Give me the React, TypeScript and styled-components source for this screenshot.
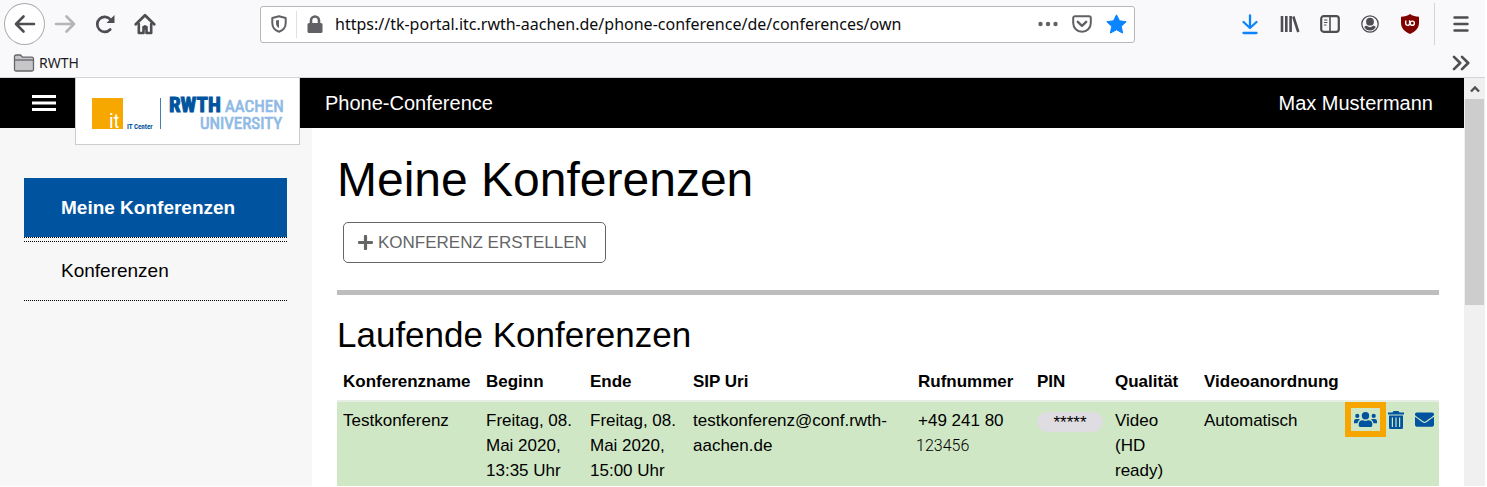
import React from 'react';
import styled, { createGlobalStyle, css } from 'styled-components';
import { FaPlus, FaEnvelope } from 'react-icons/fa';

const GlobalStyle = createGlobalStyle`
  *, *::before, *::after { box-sizing: border-box; }
  body { margin: 0; background: #fff; color: #000; font-family: "Liberation Sans", Arial, sans-serif; }
  button { font: inherit; cursor: pointer; }
  svg { display: block; flex: none; }
`;

const Window = styled.div`
  padding-right: 2px;
`;

const Chrome = styled.div`
  background: #f9f9fb;
  border-bottom: 1px solid #d4d4d7;
  color: #4e4e52;
`;

const Toolbar = styled.div`
  display: flex;
  align-items: center;
  height: 48px;
  padding: 0 4px;
`;

const ToolButton = styled.button<{ $round?: boolean; $color?: string }>`
  display: flex;
  align-items: center;
  justify-content: center;
  flex: none;
  width: 40px;
  height: 40px;
  padding: 0;
  border: 0;
  background: none;
  color: ${p => p.$color ?? 'inherit'};
  ${p => p.$round && css`
    width: 41px;
    height: 42px;
    border: 1px solid #a9a9ac;
    border-radius: 50%;
    background: #fff;
  `}
`;

const AddressBar = styled.div`
  display: flex;
  align-items: center;
  flex: 1;
  min-width: 0;
  height: 37px;
  margin: 0 95px;
  padding: 0 7px 0 10px;
  border: 1px solid #b8b8bb;
  border-radius: 3px;
  background: #fff;
  color: #616165;
`;

const AddressDivider = styled.span`
  width: 1px;
  height: 27px;
  margin: 0 10px 0 9px;
  background: #e0e0e2;
`;

const AddressInput = styled.input`
  flex: 1;
  min-width: 0;
  margin-left: 12px;
  padding: 0;
  border: 0;
  outline: 0;
  background: none;
  color: #0c0c0d;
  font: 16px/24px "Noto Sans", "Open Sans", sans-serif;
`;

const AddressActions = styled.div`
  display: flex;
  align-items: center;
  gap: 14px;
`;

const BareButton = styled.button<{ $color?: string }>`
  padding: 0;
  border: 0;
  background: none;
  color: ${p => p.$color ?? 'inherit'};
`;

const ToolDivider = styled.span`
  width: 1px;
  height: 42px;
  margin: 0 6px 0 4px;
  background: #d4d4d7;
`;

const Bookmarks = styled.div`
  display: flex;
  align-items: center;
  justify-content: space-between;
  height: 29px;
  padding: 0 15px 0 13px;
`;

const Bookmark = styled.a`
  display: flex;
  align-items: center;
  gap: 4px;
  color: #1c1c1e;
  text-decoration: none;
  font: 14px/20px "Noto Sans", "Open Sans", sans-serif;
`;

const Viewport = styled.div`
  display: grid;
  grid-template-columns: minmax(0, 1fr) 21px;
`;

const ScrollTrack = styled.div`
  display: flex;
  flex-direction: column;
  align-items: center;
  background: #f0f0f0;
`;

const ScrollArrow = styled.div`
  display: flex;
  align-items: center;
  height: 21px;
  color: #505050;
`;

const ScrollThumb = styled.div`
  width: 19px;
  height: 206px;
  background: #cdcdcd;
`;

const Header = styled.header`
  display: flex;
  align-items: flex-start;
  height: 50px;
  padding-right: 31px;
  background: #000;
  color: #fff;
  font-size: 20px;
  line-height: 50px;
`;

const MenuButton = styled.button`
  display: flex;
  align-items: center;
  width: 75px;
  height: 50px;
  padding: 0 0 0 32px;
  border: 0;
  background: none;
  color: #fff;
`;

const LogoLink = styled.a`
  position: relative;
  z-index: 1;
  width: 225px;
  height: 67px;
  border: 1px solid #ccc;
  border-top: 0;
  background: #fff;
`;

const AppName = styled.span`
  flex: 1;
  margin-left: 25px;
`;

const Columns = styled.div`
  display: grid;
  grid-template-columns: 312px minmax(0, 1fr);
`;

const Sidebar = styled.nav`
  padding: 50px 25px 0 24px;
  background: #f7f7f7;
`;

const NavList = styled.ul`
  display: flex;
  flex-direction: column;
  gap: 3px;
  margin: 0;
  padding: 0;
  list-style: none;
`;

const NavLink = styled.a<{ $active?: boolean }>`
  display: flex;
  align-items: center;
  height: 60px;
  padding-left: 37px;
  border-bottom: 1px dotted #000;
  color: #000;
  font-size: 19px;
  text-decoration: none;
  ${p => p.$active
    ? css`background: #00549f; background-clip: padding-box; color: #fff; font-weight: bold;`
    : css`border-top: 1px dotted #000;`}
`;

const Main = styled.main`
  padding: 23px 25px 0;
`;

const Title = styled.h1`
  margin: 0 0 13px;
  font-size: 48px;
  line-height: 58px;
  font-weight: normal;
`;

const CreateButton = styled.button`
  display: flex;
  align-items: center;
  gap: 4px;
  height: 41px;
  margin-left: 6px;
  padding: 0 18px 0 13px;
  border: 1px solid #646567;
  border-radius: 5px;
  background: #fff;
  color: #646567;
  && { font-size: 17px; }
`;

const Rule = styled.hr`
  height: 5px;
  margin: 27px 0 19px;
  border: 0;
  background: #bdbdbd;
`;

const Subtitle = styled.h2`
  margin: 0 0 7px;
  font-size: 35px;
  line-height: 42px;
  font-weight: normal;
`;

const Table = styled.table`
  width: 100%;
  table-layout: fixed;
  border-collapse: separate;
  border-spacing: 0;
  font-size: 17px;
  line-height: 25px;
`;

const Col = styled.col<{ $width?: number }>`
  width: ${p => (p.$width ? `${p.$width}px` : 'auto')};
`;

const HeadCell = styled.th`
  padding: 6px;
  border-bottom: 2px solid #e6ede4;
  text-align: left;
  white-space: nowrap;
`;

const Cell = styled.td`
  padding: 6px 6px 3px;
  background: #cfe7c4;
  vertical-align: top;
`;

const ActionCell = styled(Cell)`
  padding: 0;
`;

const Extension = styled.span`
  display: block;
  margin-left: -2px;
  font: 300 16px/25px Roboto, "Liberation Sans", sans-serif;
`;

const Pin = styled.span`
  display: block;
  height: 20px;
  margin: 4px 0;
  border-radius: 10px;
  background: #e0dde2;
  font-size: 17px;
  line-height: 21px;
  text-align: center;
`;

const Actions = styled.div`
  display: flex;
  align-items: center;
  height: 35px;
  color: #00549f;
`;

const ActionButton = styled.button<{ $marked?: boolean }>`
  display: flex;
  align-items: center;
  justify-content: center;
  width: 28px;
  height: 35px;
  padding: 0;
  border: 0;
  background: none;
  color: inherit;
  ${p => p.$marked && css`
    width: 41px;
    margin-right: -4px;
    border: 6px solid #f7a600;
  `}
`;

const stroke = {
  fill: 'none',
  stroke: 'currentColor',
  strokeWidth: 2.6,
  strokeLinecap: 'round' as const,
  strokeLinejoin: 'round' as const,
};

const BackIcon = () => (
  <svg width="22" height="20" viewBox="0 0 22 20" {...stroke}>
    <path d="M20 10H2.500M9.500 2.500 2 10l7.500 7.500" />
  </svg>
);

const ForwardIcon = () => (
  <svg width="22" height="20" viewBox="0 0 22 20" {...stroke}>
    <path d="M2 10h17.500M12.500 2.500 20 10l-7.500 7.500" />
  </svg>
);

const ReloadIcon = () => (
  <svg width="20" height="20" viewBox="0 0 20 20" {...stroke}>
    <path d="M15.200 15.500A7.500 7.500 0 1 1 15.500 5.500" strokeWidth="2.700" />
    <path d="M19.500 1v8h-8z" fill="currentColor" stroke="none" />
  </svg>
);

const HomeIcon = () => (
  <svg width="22" height="22" viewBox="0 0 22 22" {...stroke}>
    <path d="M1.800 11.300 11 2.300l9.200 9" strokeWidth="2.800" />
    <path d="M4.800 11v9h4.700v-6h3v6h4.700v-9" />
    <path d="M11 13v3" strokeWidth="2" />
  </svg>
);

const ShieldIcon = () => (
  <svg width="16" height="18" viewBox="0 0 16 18" {...stroke} strokeWidth={2}>
    <path d="M8 1.200 14.700 3v5c0 4.500-2.500 7.300-6.700 8.800C3.800 15.300 1.300 12.500 1.300 8V3z" />
    <path d="M8 5v8C6 12 5 10.500 5 8V5.500z" fill="currentColor" stroke="none" />
  </svg>
);

const LockIcon = () => (
  <svg width="16" height="18" viewBox="0 0 16 18" {...stroke}>
    <path d="M4 9V5.500a4 4 0 0 1 8 0V9" strokeWidth="2.600" />
    <rect x="0.500" y="8" width="15" height="10" rx="1.500" fill="currentColor" stroke="none" />
  </svg>
);

const DotsIcon = () => (
  <svg width="20" height="6" viewBox="0 0 20 6" fill="currentColor">
    <circle cx="2.500" cy="3" r="2.200" />
    <circle cx="10" cy="3" r="2.200" />
    <circle cx="17.500" cy="3" r="2.200" />
  </svg>
);

const PocketIcon = () => (
  <svg width="20" height="18" viewBox="0 0 20 18" {...stroke} strokeWidth={2}>
    <path d="M3 1.200h14a1.800 1.800 0 0 1 1.800 1.800v5a8.800 8.800 0 0 1-17.600 0V3A1.800 1.800 0 0 1 3 1.200z" />
    <path d="M5.800 6.800 10 10.800l4.200-4" strokeWidth="2.400" />
  </svg>
);

const StarIcon = () => (
  <svg width="21" height="20" viewBox="0 0 21 20" fill="currentColor" stroke="currentColor" strokeLinejoin="round">
    <path d="m10.500.800 3 6 6.700.9-4.900 4.600 1.300 6.800-6.100-3.300-6.100 3.300 1.300-6.800L.8 7.700l6.700-.9z" />
  </svg>
);

const DownloadIcon = () => (
  <svg width="18" height="22" viewBox="0 0 18 22" {...stroke}>
    <path d="M9 2.500v12M2.500 9l6.500 6 6.500-6M2.500 20h13" strokeWidth="2.300" />
  </svg>
);

const LibraryIcon = () => (
  <svg width="20" height="18" viewBox="0 0 20 18" {...stroke} strokeLinecap="butt">
    <path d="M2 1v16M6.300 1v16M10.600 1v16M13.300 1.500l5 15.500" />
  </svg>
);

const SidebarIcon = () => (
  <svg width="20" height="18" viewBox="0 0 20 18" {...stroke} strokeWidth={2.2}>
    <rect x="1.200" y="1.200" width="17.600" height="15.600" rx="2.500" />
    <path d="M10 1.500v15" strokeWidth="1.600" />
    <path d="M4.500 5h2.500M4.500 7.500h2.500M4.500 10h1.500" strokeWidth="1.200" />
  </svg>
);

const AccountIcon = () => (
  <svg width="18" height="18" viewBox="0 0 18 18">
    <circle cx="9" cy="9" r="8.200" fill="none" stroke="currentColor" strokeWidth="1.300" />
    <circle cx="9" cy="6.700" r="3.900" fill="currentColor" />
    <path d="M3.300 12c.8-1 1.600-1.200 2.500-1.200a5 5 0 0 0 6.400 0c.9 0 1.700.2 2.500 1.200A6.600 6.600 0 0 1 9 15.600 6.600 6.600 0 0 1 3.300 12z" fill="currentColor" />
  </svg>
);

const BlockerIcon = () => (
  <svg width="18" height="20" viewBox="0 0 18 20">
    <path d="M9 0c2.500 1.800 5.500 2.600 9 2.800V9c0 5-3.500 8.500-9 11C3.500 17.500 0 14 0 9V2.800C3.500 2.600 6.500 1.800 9 0z" fill="#800000" />
    <path d="M4.700 6.500v3a1.900 1.900 0 0 0 3.800 0M8.600 6.300v3" fill="none" stroke="#fff" strokeWidth="1.400" />
    <circle cx="11.300" cy="9.200" r="2.100" fill="none" stroke="#fff" strokeWidth="1.400" />
  </svg>
);

const MenuIcon = () => (
  <svg width="16" height="16" viewBox="0 0 16 16" {...stroke}>
    <path d="M1.500 1.500h13M1.500 8h13M1.500 14.500h13" strokeWidth="2.400" />
  </svg>
);

const MoreIcon = () => (
  <svg width="18" height="16" viewBox="0 0 18 16" {...stroke}>
    <path d="m2 1.800 6.200 6.200L2 14.200M10 1.800 16.200 8 10 14.200" />
  </svg>
);

const FolderIcon = () => (
  <svg width="22" height="18" viewBox="0 0 22 18" fill="#c6c6c9" stroke="#65656a" strokeWidth="1.300">
    <path d="M1.500 15.500v-13A1.500 1.500 0 0 1 3 1h4.500l2 2.200H19a1.500 1.500 0 0 1 1.500 1.500v10.800A1.500 1.500 0 0 1 19 17H3a1.500 1.500 0 0 1-1.500-1.500z" />
    <path d="M1.500 6H20.500" />
  </svg>
);

const BurgerIcon = () => (
  <svg width="24" height="16" viewBox="0 0 24 16" fill="currentColor">
    <path d="M0 0h24v3H0zM0 6.500h24v3H0zM0 13h24v3H0z" />
  </svg>
);

const ArrowUpIcon = () => (
  <svg width="10" height="8" viewBox="0 0 10 8" fill="none" stroke="currentColor" strokeWidth="2.400">
    <path d="M1 6.500 5 2.500l4 4" />
  </svg>
);

const UsersIcon = () => (
  <svg width="23" height="15" viewBox="0 0 23 15" fill="currentColor">
    <circle cx="11.500" cy="3.700" r="3.700" />
    <circle cx="3.300" cy="3.900" r="2.100" />
    <circle cx="19.700" cy="3.900" r="2.100" />
    <path d="M0 11.300V9.200a2.200 2.200 0 0 1 2.200-2.200h2.300c.6 0 1.100.2 1.500.6-1.300.8-2.200 2.100-2.500 3.700z" />
    <path d="M23 11.300V9.200a2.200 2.200 0 0 0-2.200-2.200h-2.300c-.6 0-1.100.2-1.500.6 1.300.8 2.200 2.100 2.500 3.700z" />
    <path d="M4.700 13.500v-1.200a4 4 0 0 1 4-4h.4a5.300 5.300 0 0 0 4.800 0h.4a4 4 0 0 1 4 4v1.200a1.400 1.400 0 0 1-1.400 1.400H6.100a1.400 1.400 0 0 1-1.400-1.400z" />
  </svg>
);

const TrashIcon = () => (
  <svg width="16" height="18" viewBox="0 0 16 18" fill="currentColor">
    <path d="M5.500 0h5l1 1.500H16v2H0v-2h4.500z" />
    <path fillRule="evenodd" d="M1 4.500h14V16.500A1.500 1.500 0 0 1 13.500 18h-11A1.500 1.500 0 0 1 1 16.500zM3.800 6.500v9.500h1.200V6.500zM7.400 6.500v9.500h1.200V6.500zM11 6.500v9.500h1.200V6.500z" />
  </svg>
);

const Logo = () => (
  <svg width="223" height="66" viewBox="0 0 223 66" fontFamily='"Roboto Condensed", "Liberation Sans", sans-serif'>
    <rect x="16" y="20" width="31" height="31" fill="#f6a800" />
    <text x="33" y="50" fontSize="20" fill="#fff">it</text>
    <text x="51" y="51" fontSize="7" fontWeight="bold" fill="#00549f">IT Center</text>
    <path d="M84.500 20v31" stroke="#407fb7" />
    <text x="93" y="34" fontSize="21" fontWeight="bold" fill="#00549f" stroke="#00549f">RWTH</text>
    <text x="149" y="34" fontSize="17" fill="#8ebae5" stroke="#8ebae5" strokeWidth="0.700">AACHEN</text>
    <text x="124" y="51" fontSize="17" fill="#8ebae5" stroke="#8ebae5" strokeWidth="0.700">UNIVERSITY</text>
  </svg>
);

const columns = [
  { label: 'Konferenzname', width: 143 },
  { label: 'Beginn', width: 104 },
  { label: 'Ende', width: 103 },
  { label: 'SIP Uri' },
  { label: 'Rufnummer', width: 119 },
  { label: 'PIN', width: 78 },
  { label: 'Qualität', width: 89 },
  { label: 'Videoanordnung', width: 147 },
  { label: '', width: 94 },
];

export default function App() {
  return (
    <Window>
      <GlobalStyle />
      <Chrome>
        <Toolbar>
          <ToolButton $round aria-label="Zurück"><BackIcon /></ToolButton>
          <ToolButton $color="#b5b5b8" aria-label="Vor"><ForwardIcon /></ToolButton>
          <ToolButton aria-label="Neu laden"><ReloadIcon /></ToolButton>
          <ToolButton aria-label="Startseite"><HomeIcon /></ToolButton>
          <AddressBar>
            <ShieldIcon />
            <AddressDivider />
            <LockIcon />
            <AddressInput
              aria-label="Adresse"
              defaultValue="https://tk-portal.itc.rwth-aachen.de/phone-conference/de/conferences/own"
            />
            <AddressActions>
              <BareButton aria-label="Seitenaktionen"><DotsIcon /></BareButton>
              <BareButton aria-label="Pocket"><PocketIcon /></BareButton>
              <BareButton $color="#0a84ff" aria-label="Lesezeichen"><StarIcon /></BareButton>
            </AddressActions>
          </AddressBar>
          <ToolButton $color="#0a84ff" aria-label="Downloads"><DownloadIcon /></ToolButton>
          <ToolButton aria-label="Bibliothek"><LibraryIcon /></ToolButton>
          <ToolButton aria-label="Seitenleiste"><SidebarIcon /></ToolButton>
          <ToolButton aria-label="Konto"><AccountIcon /></ToolButton>
          <ToolButton aria-label="Werbeblocker"><BlockerIcon /></ToolButton>
          <ToolDivider />
          <ToolButton aria-label="Menü"><MenuIcon /></ToolButton>
        </Toolbar>
        <Bookmarks>
          <Bookmark href="#rwth"><FolderIcon />RWTH</Bookmark>
          <BareButton aria-label="Weitere Lesezeichen"><MoreIcon /></BareButton>
        </Bookmarks>
      </Chrome>
      <Viewport>
        <div>
          <Header>
            <MenuButton aria-label="Navigation"><BurgerIcon /></MenuButton>
            <LogoLink href="#start" aria-label="Startseite"><Logo /></LogoLink>
            <AppName>Phone-Conference</AppName>
            <span>Max Mustermann</span>
          </Header>
          <Columns>
            <Sidebar>
              <NavList>
                <li><NavLink href="#own" $active>Meine Konferenzen</NavLink></li>
                <li><NavLink href="#all">Konferenzen</NavLink></li>
              </NavList>
            </Sidebar>
            <Main>
              <Title>Meine Konferenzen</Title>
              <CreateButton><FaPlus size={17} />KONFERENZ ERSTELLEN</CreateButton>
              <Rule />
              <Subtitle>Laufende Konferenzen</Subtitle>
              <Table>
                <colgroup>
                  {columns.map(c => <Col key={c.label} $width={c.width} />)}
                </colgroup>
                <thead>
                  <tr>
                    {columns.map(c => <HeadCell key={c.label} scope="col">{c.label}</HeadCell>)}
                  </tr>
                </thead>
                <tbody>
                  <tr>
                    <Cell>Testkonferenz</Cell>
                    <Cell>Freitag, 08. Mai 2020, 13:35 Uhr</Cell>
                    <Cell>Freitag, 08. Mai 2020, 15:00 Uhr</Cell>
                    <Cell>testkonferenz@conf.rwth-aachen.de</Cell>
                    <Cell>+49 241 80 <Extension>123456</Extension></Cell>
                    <Cell><Pin>*****</Pin></Cell>
                    <Cell>Video (HD ready)</Cell>
                    <Cell>Automatisch</Cell>
                    <ActionCell>
                      <Actions>
                        <ActionButton $marked aria-label="Teilnehmer"><UsersIcon /></ActionButton>
                        <ActionButton aria-label="Löschen"><TrashIcon /></ActionButton>
                        <ActionButton aria-label="E-Mail"><FaEnvelope size={19} /></ActionButton>
                      </Actions>
                    </ActionCell>
                  </tr>
                </tbody>
              </Table>
            </Main>
          </Columns>
        </div>
        <ScrollTrack aria-hidden="true">
          <ScrollArrow><ArrowUpIcon /></ScrollArrow>
          <ScrollThumb />
        </ScrollTrack>
      </Viewport>
    </Window>
  );
}
